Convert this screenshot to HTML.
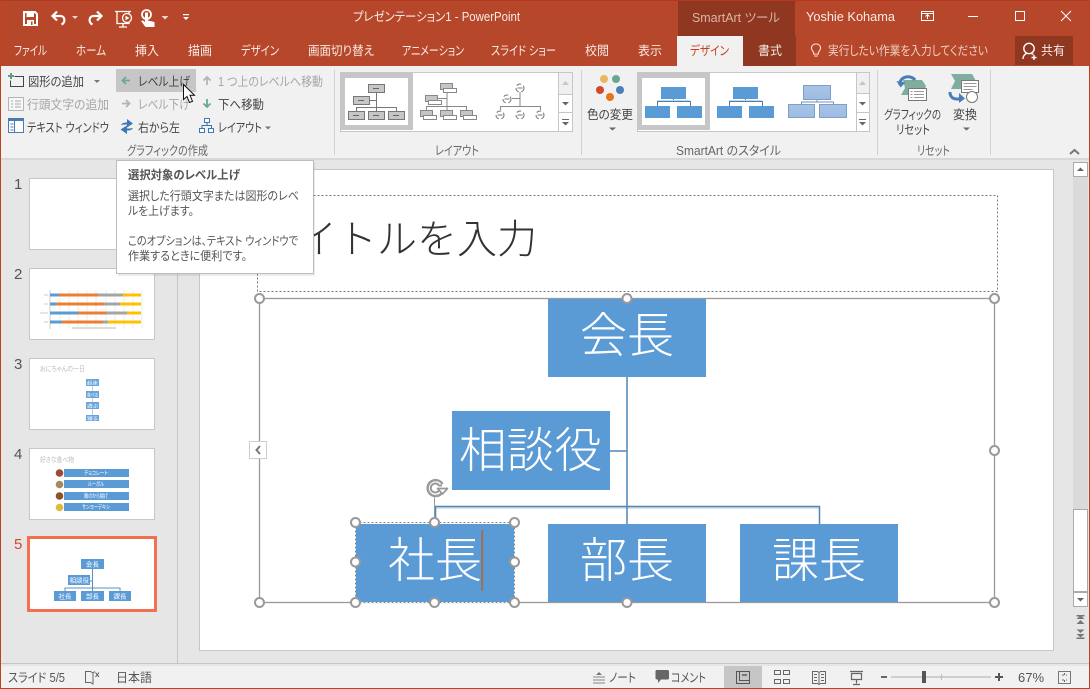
<!DOCTYPE html>
<html lang="ja"><head><meta charset="utf-8"><title>PowerPoint</title>
<style>
html,body{margin:0;padding:0;background:#e6e6e6;overflow:hidden}
svg{display:block}
text{font-family:"Liberation Sans","Noto Sans CJK JP",sans-serif;font-feature-settings:"palt";white-space:pre;font-size:12.5px;fill:#444}
.w{fill:#f8ecE8}
.g{fill:#a6a6a6}
.l{fill:#666}
.t{font-size:11.8px;fill:#555}
.b{font-size:48px;fill:#fff;font-family:"Noto Sans CJK JP",sans-serif;font-weight:300}
.s{fill:#555;font-size:12.5px}
.n{font-size:15px;fill:#555}
.h{fill:#fff;stroke:#999;stroke-width:2}
.m{font-size:5.5px;fill:#fff}
</style></head><body>
<svg width="1090" height="689" viewBox="0 0 1090 689" xmlns="http://www.w3.org/2000/svg">
<defs>
<linearGradient id="gb" x1="0" y1="0" x2="0" y2="1"><stop offset="0" stop-color="#a9c4e8"/><stop offset="1" stop-color="#9dbbe2"/></linearGradient>
</defs>
<rect width="1090" height="689" fill="#e6e6e6"/>
<!-- title bar -->
<rect width="1090" height="66" fill="#b7472a"/>
<rect width="1090" height="1" fill="#b5381e"/>
<rect x="678" y="1" width="117" height="35" fill="#8f3720"/>
<rect x="743" y="36" width="53" height="30" fill="#8f3720"/>
<rect x="677" y="36" width="66" height="31" fill="#f1f1f1"/>
<rect x="1015" y="36" width="58" height="29" fill="#8f3720"/>
<!-- QAT icons -->
<path d="M24 12h11l2 2v11h-13z" fill="none" stroke="#fff" stroke-width="2"/><rect x="26.500" y="11" width="7.500" height="6" fill="#fff"/><rect x="27" y="20" width="7" height="5" fill="#fff"/><rect x="31" y="21.500" width="1.500" height="3.500" fill="#b7472a"/>
<path d="M57 11.500l-4.500 4.500 4.500 4.500M53 16h7.500c4.500 0 5.500 6.500 1 8.500" fill="none" stroke="#fff" stroke-width="2.200"/>
<path d="M72 16h6l-3 3z" fill="#f0d8d0"/>
<path d="M97 11.500l4.500 4.500-4.500 4.500M101 16h-7.500c-4.500 0-5.500 6.500-1 8.500" fill="none" stroke="#fff" stroke-width="2.200"/>
<path d="M115 11.500h16M117 11.500v12h12v-12M123 23.500v3M119 27h8" fill="none" stroke="#fff" stroke-width="1.300"/><circle cx="127" cy="18" r="4.500" fill="#b7472a" stroke="#fff" stroke-width="1.300"/><path d="M125.500 15.800l4 2.200-4 2.200z" fill="#fff"/>
<circle cx="146.500" cy="14.500" r="4.500" fill="none" stroke="#fff" stroke-width="1.800"/><path d="M145 12.500h3v8l6.500 1.500v5h-9l-4.500-6 2-.5 2 1.500z" fill="#fff"/>
<path d="M161.500 16h7l-3.500 3.500z" fill="#f0d8d0"/>
<path d="M183 14h6v1.300h-6zM183 17h6l-3 3z" fill="#fff"/>
<!-- title texts -->
<text class="w" x="353" y="21" textLength="167" lengthAdjust="spacingAndGlyphs">プレゼンテーション1 - PowerPoint</text>
<text x="692" y="22" textLength="88" lengthAdjust="spacingAndGlyphs" style="fill:#dcb5a8">SmartArt ツール</text>
<text class="w" x="806" y="21" textLength="89" lengthAdjust="spacingAndGlyphs">Yoshie Kohama</text>
<!-- window controls -->
<path d="M921.500 11.500h12v9h-12zM921.500 13.500h12" fill="none" stroke="#fff"/><path d="M927.500 19v-4.500M925.500 16.500l2-2 2 2" fill="none" stroke="#fff"/>
<rect x="968" y="16" width="10" height="1" fill="#fff"/>
<rect x="1015.500" y="11.500" width="9" height="9" fill="none" stroke="#fff"/>
<path d="M1061 11l10 10M1071 11l-10 10" stroke="#fff" fill="none"/>
<!-- tabs -->
<g class="tabs">
<text class="w" x="14" y="55" textLength="33" lengthAdjust="spacingAndGlyphs">ファイル</text>
<text class="w" x="76" y="55" textLength="30" lengthAdjust="spacingAndGlyphs">ホーム</text>
<text class="w" x="135" y="55" textLength="24" lengthAdjust="spacingAndGlyphs">挿入</text>
<text class="w" x="188" y="55" textLength="24" lengthAdjust="spacingAndGlyphs">描画</text>
<text class="w" x="241" y="55" textLength="38" lengthAdjust="spacingAndGlyphs">デザイン</text>
<text class="w" x="308" y="55" textLength="66" lengthAdjust="spacingAndGlyphs">画面切り替え</text>
<text class="w" x="402" y="55" textLength="62" lengthAdjust="spacingAndGlyphs">アニメーション</text>
<text class="w" x="491" y="55" textLength="65" lengthAdjust="spacingAndGlyphs">スライド ショー</text>
<text class="w" x="585" y="55" textLength="24" lengthAdjust="spacingAndGlyphs">校閲</text>
<text class="w" x="638" y="55" textLength="24" lengthAdjust="spacingAndGlyphs">表示</text>
<text x="690" y="55" textLength="39" lengthAdjust="spacingAndGlyphs" style="fill:#c8401f">デザイン</text>
<text class="w" x="758" y="55" textLength="24" lengthAdjust="spacingAndGlyphs">書式</text>
<text x="828" y="55" textLength="160" lengthAdjust="spacingAndGlyphs" style="fill:#ecd0c6">実行したい作業を入力してください</text>
<text class="w" x="1041" y="55" textLength="24" lengthAdjust="spacingAndGlyphs">共有</text>
</g>
<path d="M813.500 52c-4-4-1.500-8 2.500-8s6.500 4 2.500 8v2h-5zM814 56h4" fill="none" stroke="#f5e0d8" stroke-width="1.100"/>
<circle cx="1029" cy="48.500" r="5.200" fill="none" stroke="#fff" stroke-width="1.400"/><path d="M1023 59c0-3 2-5 4-6M1031.500 53.500l2 1M1034 55v5M1031.500 57.500h5" fill="none" stroke="#fff" stroke-width="1.400"/>
<!-- ribbon -->
<rect x="1" y="66" width="1088" height="92" fill="#f1f1f1"/>
<rect x="677" y="66" width="66" height="1" fill="#f1f1f1"/>
<rect x="1" y="158" width="1088" height="2" fill="#d8d8d8"/>
<path d="M334.500 70v85M581.500 70v85M877.500 70v85M990.500 70v85" stroke="#d0d0d0"/>
<rect x="116" y="69" width="80" height="23" fill="#c6c6c6"/>
<!-- left group icons -->
<path d="M8 76h6M11 73v6" stroke="#5f9c8a" stroke-width="2"/>
<path d="M14.500 76.500h9v10h-13v-6" fill="none" stroke="#444"/>
<rect x="8.500" y="97.500" width="15" height="13" fill="#f7f7f7" stroke="#b5b5b5"/><path d="M11 101h2M11 104h2M11 107h2M15 101h6M15 104h6M15 107h6" stroke="#aaa"/>
<rect x="8.500" y="118.500" width="15" height="14" fill="#fff" stroke="#4a7ab0"/><rect x="8" y="118" width="16" height="3" fill="#4a7ab0"/><path d="M14.500 121v11M10.500 124h3M10.500 127h3M10.500 130h3" stroke="#4a7ab0"/>
<path d="M94 80h6l-3 3z" fill="#777"/>
<path d="M130 80.500h-7M126 77l-3.500 3.500 3.500 3.500" fill="none" stroke="#6fa797" stroke-width="1.800"/>
<path d="M122 103.500h7M126 100l3.500 3.500-3.500 3.500" fill="none" stroke="#b5b5b5" stroke-width="1.800"/>
<path d="M121 125c1-2 3-2.500 6-2.500v-3.500l6 4.500-6 4v-3c-2 0-4 0-6 .5z" fill="#3f76b5"/><path d="M133 128c-1 2-3 2.500-6 2.500v3.500l-6.500-4.500 6.500-4v3c2 0 4 0 6-.5z" fill="#3f76b5"/>
<path d="M207 85v-8M203.500 80.500l3.500-3.500 3.500 3.500" fill="none" stroke="#b5b5b5" stroke-width="1.800"/>
<path d="M207 99v8M203.500 103.500l3.500 3.500 3.500-3.500" fill="none" stroke="#6fa797" stroke-width="1.800"/>
<rect x="204.500" y="118.500" width="5" height="4" fill="#fff" stroke="#3f76b5"/><rect x="199.500" y="128.500" width="5" height="4" fill="#fff" stroke="#3f76b5"/><rect x="208.500" y="128.500" width="5" height="4" fill="#fff" stroke="#3f76b5"/><path d="M207 122.500v3M202 128.500v-3h9.500v3" fill="none" stroke="#3f76b5"/>
<path d="M265 126.500h6l-3 3z" fill="#777"/>
<!-- left group text -->
<text x="28" y="86" textLength="56" lengthAdjust="spacingAndGlyphs">図形の追加</text>
<text class="g" x="27" y="109" textLength="82" lengthAdjust="spacingAndGlyphs">行頭文字の追加</text>
<text x="27" y="132" textLength="82" lengthAdjust="spacingAndGlyphs">テキスト ウィンドウ</text>
<text x="138" y="86" textLength="52" lengthAdjust="spacingAndGlyphs">レベル上げ</text>
<text class="g" x="138" y="109" textLength="52" lengthAdjust="spacingAndGlyphs">レベル下げ</text>
<text x="138" y="132" textLength="42" lengthAdjust="spacingAndGlyphs">右から左</text>
<text class="g" x="218" y="86" textLength="105" lengthAdjust="spacingAndGlyphs">1 つ上のレベルへ移動</text>
<text x="218" y="109" textLength="46" lengthAdjust="spacingAndGlyphs">下へ移動</text>
<text x="218" y="132" textLength="44" lengthAdjust="spacingAndGlyphs">レイアウト</text>
<text class="l" x="127" y="155" textLength="81" lengthAdjust="spacingAndGlyphs">グラフィックの作成</text>
<text class="l" x="435" y="155" textLength="44" lengthAdjust="spacingAndGlyphs">レイアウト</text>
<text class="l" x="676" y="155" textLength="105" lengthAdjust="spacingAndGlyphs">SmartArt のスタイル</text>
<text class="l" x="917" y="155" textLength="33" lengthAdjust="spacingAndGlyphs">リセット</text>
<!-- layout gallery -->
<rect x="340.500" y="72.500" width="232" height="59" fill="#fff" stroke="#c6c6c6"/>
<rect x="342.500" y="75.500" width="68" height="52" fill="#fff" stroke="#c6c6c6" stroke-width="5"/>
<g fill="#c6c6c6" stroke="#777">
<rect x="368.500" y="84.500" width="16" height="8"/><rect x="353.500" y="96.500" width="16" height="8"/><rect x="348.500" y="111.500" width="16" height="8"/><rect x="368.500" y="111.500" width="16" height="8"/><rect x="388.500" y="111.500" width="16" height="8"/>
</g>
<path d="M376.500 92.500v19M369.500 100.500h7M356.500 111v-3.500h40v3.500" fill="none" stroke="#777"/>
<path d="M373 88.500h6M358 100.500h6M353 115.500h6M373 115.500h6M393 115.500h6" stroke="#666"/>
<path d="M447 89v21M438 98.500h9M426.500 110v-3.500h40v3.500" fill="none" stroke="#888"/>
<g fill="#c6c6c6" stroke="#888">
<rect x="440.500" y="83.500" width="12" height="6"/><rect x="425.500" y="95.500" width="12" height="6"/><rect x="420.500" y="110.500" width="12" height="6"/><rect x="440.500" y="110.500" width="12" height="6"/><rect x="460.500" y="110.500" width="12" height="6"/>
</g>
<g fill="#fff" stroke="#888">
<rect x="443.500" y="88.500" width="13" height="4"/><rect x="428.500" y="100.500" width="13" height="4"/><rect x="423.500" y="115.500" width="13" height="4"/><rect x="443.500" y="115.500" width="13" height="4"/><rect x="463.500" y="115.500" width="13" height="4"/>
</g>
<path d="M520 92v15M512 98.500h8M500.500 110v-3.500h40v3.500" fill="none" stroke="#888"/>
<g fill="#fff" stroke="#777" stroke-dasharray="5 2.500">
<circle cx="520" cy="88" r="4"/><circle cx="507" cy="99" r="4"/><circle cx="500" cy="115" r="4"/><circle cx="520" cy="115" r="4"/><circle cx="540" cy="115" r="4"/>
</g>
<path d="M517.500 88h5M504.500 99h5M497.500 115h5M517.500 115h5M537.500 115h5" stroke="#777"/>
<rect x="558.500" y="72.500" width="14" height="59" fill="#fff" stroke="#c6c6c6"/><rect x="559" y="73" width="13" height="21" fill="#f0f0f0"/><path d="M558 94.500h15M558 112.500h15" stroke="#c6c6c6"/>
<path d="M562 85l3.500-4 3.500 4z" fill="#c6c6c6"/><path d="M562 102h7l-3.500 3.500z" fill="#666"/><path d="M562 119h7v1h-7zM562 122h7l-3.500 3.500z" fill="#666"/>
<!-- color change -->
<circle cx="604" cy="79" r="4" fill="#ecb561"/><circle cx="616" cy="79" r="4" fill="#69a790"/><circle cx="600" cy="90" r="4" fill="#d1492e"/><circle cx="620" cy="90" r="4" fill="#4a7ebb"/><circle cx="610" cy="97" r="4" fill="#e8741c"/>
<text x="587" y="119" textLength="46" lengthAdjust="spacingAndGlyphs">色の変更</text>
<path d="M609 127.500h7l-3.500 3z" fill="#666"/>
<!-- style gallery -->
<rect x="637.500" y="72.500" width="232" height="59" fill="#fff" stroke="#c6c6c6"/>
<rect x="639.500" y="75.500" width="68" height="52" fill="#fff" stroke="#c6c6c6" stroke-width="5"/>
<g fill="#5b9bd5">
<rect x="661" y="87" width="25" height="12"/><rect x="645" y="106" width="25" height="12"/><rect x="677" y="106" width="25" height="12"/>
<rect x="733" y="87" width="25" height="12"/><rect x="717" y="106" width="25" height="12"/><rect x="749" y="106" width="25" height="12"/>
</g>
<path d="M673.500 99v2.500M657.500 106v-4.500h33v4.500M745.500 99v2.500M729.500 106v-4.500h33v4.500" fill="none" stroke="#4a7fae"/>
<path d="M657 100.500h33M729 100.500h33" stroke="#c5d9ec"/>
<rect x="803.500" y="85.500" width="27" height="14" fill="url(#gb)" stroke="#7f9fc4"/><rect x="788.500" y="104.500" width="26" height="13" fill="url(#gb)" stroke="#7f9fc4"/><rect x="819.500" y="104.500" width="27" height="13" fill="url(#gb)" stroke="#7f9fc4"/>
<path d="M817 100v2M801.500 104.500v-2.500h32v2.500" fill="none" stroke="#6f92b8"/>
<rect x="856.500" y="72.500" width="13" height="59" fill="#fff" stroke="#c6c6c6"/><rect x="857" y="73" width="12" height="21" fill="#f0f0f0"/><path d="M856 93.500h14M856 112.500h14" stroke="#c6c6c6"/>
<path d="M859 85l3.500-4 3.500 4z" fill="#c6c6c6"/><path d="M859 102h7l-3.500 3.500z" fill="#666"/><path d="M859 119h7v1h-7zM859 122h7l-3.500 3.500z" fill="#666"/>
<!-- reset -->
<path d="M903 80h19l4 6-3 9h-22l4-7z" fill="#7fae9f"/>
<path d="M900 85c-1-6 5-9 10-8 2 .5 4 1.500 5 3" fill="none" stroke="#4a7fb5" stroke-width="3"/><path d="M896.500 81l4 6.500 5-5z" fill="#4a7fb5"/>
<rect x="908.500" y="88.500" width="18" height="12" fill="#fff" stroke="#777"/><path d="M910.500 91.500h2M910.500 94.500h2M910.500 97.500h2M914 91.500h10M914 94.500h10M914 97.500h10" stroke="#999"/>
<path d="M951 74h21l4 7-4 8h-21l4-8z" fill="#7fae9f"/>
<rect x="961.500" y="80.500" width="17" height="12" fill="#fff" stroke="#777"/><path d="M963.500 83.500h13M963.500 86.500h13M963.500 89.500h9" stroke="#999"/>
<path d="M950 92c0 5 3 7 7 7h5" fill="none" stroke="#4a7fb5" stroke-width="3"/><path d="M959 93l6 5.500-6 4.500z" fill="#4a7fb5"/>
<circle cx="972" cy="97" r="5.500" fill="#fff" stroke="#777"/>
<text x="884" y="119" textLength="57" lengthAdjust="spacingAndGlyphs">グラフィックの</text>
<text x="896" y="134" textLength="34" lengthAdjust="spacingAndGlyphs">リセット</text>
<text x="953" y="119" textLength="24" lengthAdjust="spacingAndGlyphs">変換</text>
<path d="M963 127.500h7l-3.500 3z" fill="#666"/>
<path d="M1070 154l4.500-4 4.500 4" fill="none" stroke="#777" stroke-width="2"/>
<!-- main -->
<rect x="177" y="160" width="1" height="503" fill="#c6c6c6"/>
<rect x="1" y="663" width="1088" height="1" fill="#c6c6c6"/>
<rect x="199.500" y="169.500" width="854" height="481" fill="#fff" stroke="#c6c6c6"/>
<!-- scrollbar -->
<rect x="1073" y="162" width="15" height="445" fill="#dadada"/>
<rect x="1073.500" y="162.500" width="14" height="14" fill="#fff" stroke="#aaa"/><path d="M1077 171l3.500-3.500 3.500 3.500z" fill="#666"/>
<rect x="1073.500" y="509.500" width="14" height="82" fill="#fff" stroke="#aaa"/>
<rect x="1073.500" y="592.500" width="14" height="14" fill="#fff" stroke="#aaa"/><path d="M1077 598h7l-3.500 3.500z" fill="#666"/>
<path d="M1076.500 615h8v1.500h-8zM1076.500 619l4-3.500 4 3.500zM1076.500 624l4-4 4 4z" fill="#777"/>
<path d="M1076.500 629.500h8l-4 3.500zM1076.500 634h8l-4 3.500zM1076.500 637.500h8v1.500h-8z" fill="#777"/>
<!-- thumbnails -->
<g fill="#fff" stroke="#c6c6c6">
<rect x="29.500" y="178.500" width="125" height="71"/><rect x="29.500" y="268.500" width="125" height="71"/><rect x="29.500" y="358.500" width="125" height="71"/><rect x="29.500" y="448.500" width="125" height="71"/>
</g>
<rect x="28.500" y="537.500" width="127" height="73" fill="#fff" stroke="#f0704f" stroke-width="3"/>
<text class="n" x="14" y="189">1</text><text class="n" x="14" y="279">2</text><text class="n" x="14" y="369">3</text><text class="n" x="14" y="459">4</text><text class="n" x="14" y="549" style="fill:#d24726">5</text>
<!-- thumb2 -->
<path d="M60 290v39M69 290v39M78 290v39M87 290v39M96 290v39M106 290v39M115 290v39M124 290v39M133 290v39M142 290v39" stroke="#ececec"/>
<path d="M50 290v39" stroke="#ccc"/>
<g><rect x="50" y="293.500" width="9" height="3" fill="#5b9bd5"/><rect x="59" y="293.500" width="39" height="3" fill="#ed7d31"/><rect x="98" y="293.500" width="25" height="3" fill="#a5a5a5"/><rect x="123" y="293.500" width="18" height="3" fill="#ffc000"/>
<rect x="50" y="302.500" width="6" height="3" fill="#5b9bd5"/><rect x="56" y="302.500" width="48" height="3" fill="#ed7d31"/><rect x="104" y="302.500" width="16" height="3" fill="#a5a5a5"/><rect x="120" y="302.500" width="21" height="3" fill="#ffc000"/>
<rect x="50" y="311.500" width="28" height="3" fill="#5b9bd5"/><rect x="78" y="311.500" width="28" height="3" fill="#ed7d31"/><rect x="106" y="311.500" width="21" height="3" fill="#a5a5a5"/><rect x="127" y="311.500" width="14" height="3" fill="#ffc000"/>
<rect x="50" y="320.500" width="12" height="3" fill="#5b9bd5"/><rect x="62" y="320.500" width="41" height="3" fill="#ed7d31"/><rect x="103" y="320.500" width="5" height="3" fill="#a5a5a5"/><rect x="108" y="320.500" width="33" height="3" fill="#ffc000"/></g>
<rect x="72" y="327" width="44" height="2" fill="#ddd"/>
<path d="M44 295h4M44 304h4M40 313h8M44 322h4" stroke="#ccc"/>
<!-- thumb3 -->
<text x="40" y="371" textLength="45" lengthAdjust="spacingAndGlyphs" style="font-size:7px;fill:#bbb">おにちゃんの一日</text>
<path d="M92.500 385v30" stroke="#b8d2ea"/>
<g fill="#6aa5da"><rect x="86" y="379" width="13" height="7"/><rect x="86" y="391" width="13" height="7"/><rect x="86" y="402" width="13" height="7"/><rect x="86" y="415" width="13" height="6"/></g>
<text class="m" x="87" y="384.500" textLength="11" lengthAdjust="spacingAndGlyphs" style="font-size:4.500px">起床</text><text class="m" x="87" y="396.500" textLength="11" lengthAdjust="spacingAndGlyphs" style="font-size:4.500px">食べる</text><text class="m" x="87" y="407.500" textLength="11" lengthAdjust="spacingAndGlyphs" style="font-size:4.500px">遊ぶ</text><text class="m" x="87" y="420" textLength="11" lengthAdjust="spacingAndGlyphs" style="font-size:4.500px">寝る</text>
<!-- thumb4 -->
<text x="40" y="462" textLength="34" lengthAdjust="spacingAndGlyphs" style="font-size:7px;fill:#bbb">好きな食べ物</text>
<g fill="#5b9bd5"><rect x="64" y="469" width="65" height="8"/><rect x="64" y="480" width="65" height="8"/><rect x="64" y="492" width="65" height="8"/><rect x="64" y="503" width="65" height="8"/></g>
<circle cx="59.500" cy="473" r="3.800" fill="#9c4a35"/><circle cx="59.500" cy="484.500" r="3.800" fill="#a58a5c"/><circle cx="59.500" cy="496" r="3.800" fill="#8a5426"/><circle cx="59.500" cy="507.500" r="3.800" fill="#e0bb42"/>
<text class="m" x="84" y="475" textLength="24" lengthAdjust="spacingAndGlyphs">チョコレート</text>
<text class="m" x="88" y="486" textLength="16" lengthAdjust="spacingAndGlyphs">ルーボル</text>
<text class="m" x="84" y="498" textLength="24" lengthAdjust="spacingAndGlyphs">鶏のから揚げ</text>
<text class="m" x="82" y="509" textLength="28" lengthAdjust="spacingAndGlyphs">サンヨーデキシ</text>
<!-- thumb5 -->
<path d="M92.500 569v22M90 581h3M65 591v-3h55v3" fill="none" stroke="#5f8fb8"/>
<g fill="#5b9bd5"><rect x="81" y="559" width="23" height="10"/><rect x="68" y="575" width="22" height="10"/><rect x="54" y="591" width="22" height="10"/><rect x="81" y="591" width="23" height="10"/><rect x="109" y="591" width="22" height="10"/></g>
<text class="m" x="86" y="566.500" style="font-size:6.500px">会長</text><text class="m" x="69.500" y="582.500" style="font-size:6.500px">相談役</text><text class="m" x="58.500" y="598.500" style="font-size:6.500px">社長</text><text class="m" x="86" y="598.500" style="font-size:6.500px">部長</text><text class="m" x="113.500" y="598.500" style="font-size:6.500px">課長</text>
<!-- slide content -->
<rect x="257.500" y="195.500" width="740" height="96" fill="none" stroke="#777" stroke-dasharray="2 2"/>
<text x="257" y="253" textLength="280" lengthAdjust="spacingAndGlyphs" style="font-size:40px;fill:#333;font-weight:300;font-feature-settings:normal">タイトルを入力</text>
<rect x="259.500" y="298.500" width="735" height="304" fill="none" stroke="#999" stroke-width="1.300"/>
<path d="M436 508h383" stroke="#c9dbec" stroke-width="1.500"/>
<path d="M627 377v147M610 451h17M435.500 524v-17.500h384v17.500" fill="none" stroke="#4f86b5" stroke-width="1.500"/>
<g fill="#5b9bd5"><rect x="548" y="299" width="158" height="78"/><rect x="452" y="411" width="158" height="79"/><rect x="356" y="524" width="158" height="78"/><rect x="548" y="524" width="158" height="78"/><rect x="740" y="524" width="158" height="78"/></g>
<text class="b" x="580" y="352" textLength="94" lengthAdjust="spacingAndGlyphs">会長</text>
<text class="b" x="459" y="467" textLength="143" lengthAdjust="spacingAndGlyphs">相談役</text>
<text class="b" x="388" y="577" textLength="94" lengthAdjust="spacingAndGlyphs">社長</text>
<text class="b" x="580" y="577" textLength="94" lengthAdjust="spacingAndGlyphs">部長</text>
<text class="b" x="772" y="577" textLength="94" lengthAdjust="spacingAndGlyphs">課長</text>
<rect x="481.500" y="530" width="1.300" height="61" fill="#c55a11"/>
<rect x="355.500" y="522.500" width="159" height="80" fill="none" stroke="#fff"/>
<rect x="355.500" y="522.500" width="159" height="80" fill="none" stroke="#888" stroke-dasharray="2 2"/>
<path d="M434.500 497v26" stroke="#999"/>
<!-- rotate handle -->
<circle cx="435" cy="488" r="9.500" fill="#fff"/>
<path d="M441.500 493.500a8 8 0 1 1 1-9.500" fill="none" stroke="#999" stroke-width="2.400"/>
<path d="M439 490.500a4.500 4.500 0 1 1 0-5h3" fill="none" stroke="#999" stroke-width="2"/>
<path d="M437.500 488.500h10l-5 5.500z" fill="#fff" stroke="#999" stroke-width="1.700" stroke-linejoin="round"/>
<g class="hh">
<circle class="h" cx="259.500" cy="298.500" r="4.500"/><circle class="h" cx="627" cy="298.500" r="4.500"/><circle class="h" cx="994.500" cy="298.500" r="4.500"/><circle class="h" cx="994.500" cy="450.500" r="4.500"/><circle class="h" cx="259.500" cy="602.500" r="4.500"/><circle class="h" cx="627" cy="602.500" r="4.500"/><circle class="h" cx="994.500" cy="602.500" r="4.500"/>
<circle class="h" cx="355.500" cy="522.500" r="4.500"/><circle class="h" cx="434.500" cy="522.500" r="4.500"/><circle class="h" cx="514.500" cy="522.500" r="4.500"/><circle class="h" cx="355.500" cy="562" r="4.500"/><circle class="h" cx="514.500" cy="562" r="4.500"/><circle class="h" cx="355.500" cy="602.500" r="4.500"/><circle class="h" cx="434.500" cy="602.500" r="4.500"/><circle class="h" cx="514.500" cy="602.500" r="4.500"/>
</g>
<rect x="249.500" y="441.500" width="17" height="17" fill="#fff" stroke="#ccc"/><path d="M260 446l-3.500 4 3.500 4" fill="none" stroke="#777" stroke-width="2"/>
<!-- tooltip -->
<rect x="118" y="163" width="197" height="113" fill="#000" opacity=".08"/>
<rect x="116.500" y="160.500" width="197" height="113" fill="#fff" stroke="#bdbdbd"/>
<text class="t" x="128" y="179" textLength="112" lengthAdjust="spacingAndGlyphs" style="font-weight:700">選択対象のレベル上げ</text>
<text class="t" x="128" y="200" textLength="171" lengthAdjust="spacingAndGlyphs">選択した行頭文字または図形のレベ</text>
<text class="t" x="128" y="215" textLength="66" lengthAdjust="spacingAndGlyphs">ルを上げます。</text>
<text class="t" x="128" y="245" textLength="170" lengthAdjust="spacingAndGlyphs">このオプションは、テキスト ウィンドウで</text>
<text class="t" x="128" y="260" textLength="119" lengthAdjust="spacingAndGlyphs">作業するときに便利です。</text>
<!-- cursor -->
<path d="M183.500 84.500v15l3.500-3 2.500 6 3-1.200-2.500-6h4.500z" fill="#fff" stroke="#111"/>
<!-- status bar -->
<rect x="1" y="666" width="1088" height="22" fill="#f1f1f1"/>
<rect x="724" y="666" width="38" height="22" fill="#c6c6c6"/>
<text class="s" x="8" y="682" textLength="57" lengthAdjust="spacingAndGlyphs">スライド 5/5</text>
<text class="s" x="116" y="682" textLength="36" lengthAdjust="spacingAndGlyphs">日本語</text>
<text class="s" x="609" y="682" textLength="27" lengthAdjust="spacingAndGlyphs">ノート</text>
<text class="s" x="671" y="682" textLength="35" lengthAdjust="spacingAndGlyphs">コメント</text>
<text class="s" x="1018" y="682" textLength="26" lengthAdjust="spacingAndGlyphs">67%</text>
<path d="M85.500 671.500h5l2.500 1.500v11l-2.500-1.500h-5zM93 673l2-1.500" fill="none" stroke="#666"/><path d="M95.500 672.500l3.500 4.500M99 672.500l-3.500 4.500" stroke="#555"/>
<path d="M593 677h12M593 680h12M593 683h12" stroke="#888"/><path d="M596 675l3-3 3 3z" fill="#777"/>
<path d="M657 670h10.500a1.500 1.500 0 0 1 1.500 1.500v6.500a1.500 1.500 0 0 1-1.500 1.500h-6.500l-3 3.500v-3.500h-1a1.500 1.500 0 0 1-1.500-1.500v-6.500a1.500 1.500 0 0 1 1.500-1.500z" fill="#666"/>
<rect x="736.500" y="671.500" width="13" height="12" fill="none" stroke="#555"/><path d="M739.500 671.500v9h10" fill="none" stroke="#555"/><rect x="742" y="674" width="5" height="2" fill="#777"/>
<path d="M774.500 670.500h6v4h-6zM783.500 670.500h6v4h-6zM774.500 679.500h6v4h-6zM783.500 679.500h6v4h-6z" fill="none" stroke="#666"/>
<path d="M812.500 671.500h5l1.500 1 1.500-1h5v12h-5l-1.500 1-1.500-1h-5zM819 672.500v11M814 674.500h3M814 677.500h3M814 680.500h3M821 674.500h3M821 677.500h3M821 680.500h3" fill="none" stroke="#666"/>
<path d="M850 671.500h13M851.500 673.500h10v6h-10zM856.500 679.500v4M853 684.500h7" fill="none" stroke="#666" stroke-width="1.200"/>
<rect x="881" y="676" width="6" height="2" fill="#666"/>
<rect x="891" y="676.500" width="100" height="1" fill="#aaa"/><rect x="941" y="674" width="1" height="6" fill="#bbb"/>
<rect x="922" y="671" width="4" height="12" fill="#555"/>
<path d="M995 677h8M999 673v8" stroke="#555" stroke-width="2"/>
<rect x="1058.500" y="671.500" width="12" height="12" fill="none" stroke="#777"/><path d="M1062 675h2M1066 675h1M1062 680h2M1066 680h1M1064.500 673v2M1064.500 680v2" stroke="#666"/>
<!-- window borders -->
<rect x="0" y="0" width="1" height="689" fill="#c1401f"/>
<rect x="1089" y="0" width="1" height="689" fill="#c1401f"/>
<rect x="0" y="688" width="1090" height="1" fill="#c1401f"/>
</svg>
</body></html>
